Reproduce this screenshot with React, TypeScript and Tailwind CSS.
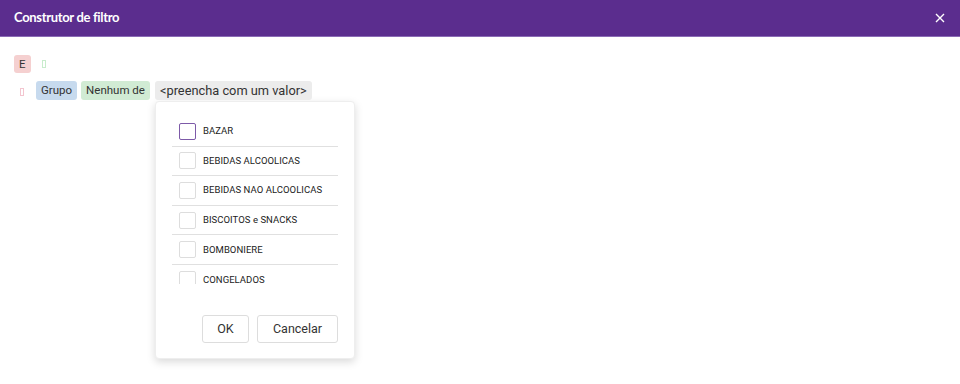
import React from "react";

const grupos = [
  "BAZAR",
  "BEBIDAS ALCOOLICAS",
  "BEBIDAS NAO ALCOOLICAS",
  "BISCOITOS e SNACKS",
  "BOMBONIERE",
  "CONGELADOS",
];

const Tofu = ({ color }: { color: string }) => (
  <span className={`inline-block w-[4px] h-[8px] border ${color}`} />
);

const FilterBuilder = () => {
  return (
    <div className="w-[960px] h-[384px] bg-white font-['Roboto',sans-serif] text-[#333]">
      {/* Header */}
      <div className="h-[37px] bg-[#5b2d8e] flex items-center justify-between pl-[14px] pr-[15px] border-b border-[#8a6bb5]">
        <h1 className="text-white text-[13px] font-bold font-['Lato',sans-serif] tracking-tight">
          Construtor de filtro
        </h1>
        <svg width="10" height="10" viewBox="0 0 10 10">
          <path d="M1 1L9 9M9 1L1 9" stroke="white" strokeWidth="1.4" />
        </svg>
      </div>

      {/* Body */}
      <div className="pl-[14px] pt-[18px]">
        <div className="flex items-center gap-[11px] h-[18px]">
          <span className="h-[18px] px-[5px] rounded-[3px] bg-[#f5d0d0] text-[11.5px] leading-[18px] text-[#333]">
            E
          </span>
          <Tofu color="border-[#c8eccc]" />
        </div>

        <div className="flex items-center mt-[8px] h-[19px]">
          <span className="ml-[6px] mr-[12px]">
            <Tofu color="border-[#f3c5cf]" />
          </span>
          <span className="h-[19px] px-[5px] rounded-[3px] bg-[#c7daee] text-[11.5px] leading-[19px]">
            Grupo
          </span>
          <span className="ml-[4px] h-[19px] px-[5px] rounded-[3px] bg-[#d1ebd4] text-[11.5px] leading-[19px]">
            Nenhum de
          </span>
          <span className="ml-[5px] h-[19px] px-[5px] rounded-[3px] bg-[#ececec] text-[12.8px] leading-[19px]">
            &lt;preencha com um valor&gt;
          </span>
        </div>

        {/* Dropdown */}
        <div className="ml-[141px] mt-[1px] w-[200px] h-[258px] bg-white rounded-[4px] border border-[#eeeeee] shadow-[0_3px_8px_rgba(0,0,0,0.15)] pt-[15px] px-[16px]">
          <div className="h-[167px] overflow-hidden">
            {grupos.map((g, i) => (
              <div
                key={g}
                className={`flex items-center h-[29.6px] pl-[7px] ${i < grupos.length - 1 ? "border-b border-[#e0e0e0]" : ""}`}
              >
                <span
                  className={`w-[17px] h-[17px] rounded-[2px] border ${i === 0 ? "border-[#7d5aa8]" : "border-[#dddddd]"}`}
                />
                <span className="ml-[7px] text-[9.5px] text-[#222] tracking-[0.05px]">{g}</span>
              </div>
            ))}
          </div>
          <div className="flex justify-end gap-[8px] mt-[31px]">
            <button className="w-[47px] h-[28px] rounded-[3px] border border-[#dddddd] text-[12.5px] text-[#333] bg-white">
              OK
            </button>
            <button className="w-[81px] h-[28px] rounded-[3px] border border-[#dddddd] text-[12.5px] text-[#333] bg-white">
              Cancelar
            </button>
          </div>
        </div>
      </div>
    </div>
  );
};

export default FilterBuilder;
